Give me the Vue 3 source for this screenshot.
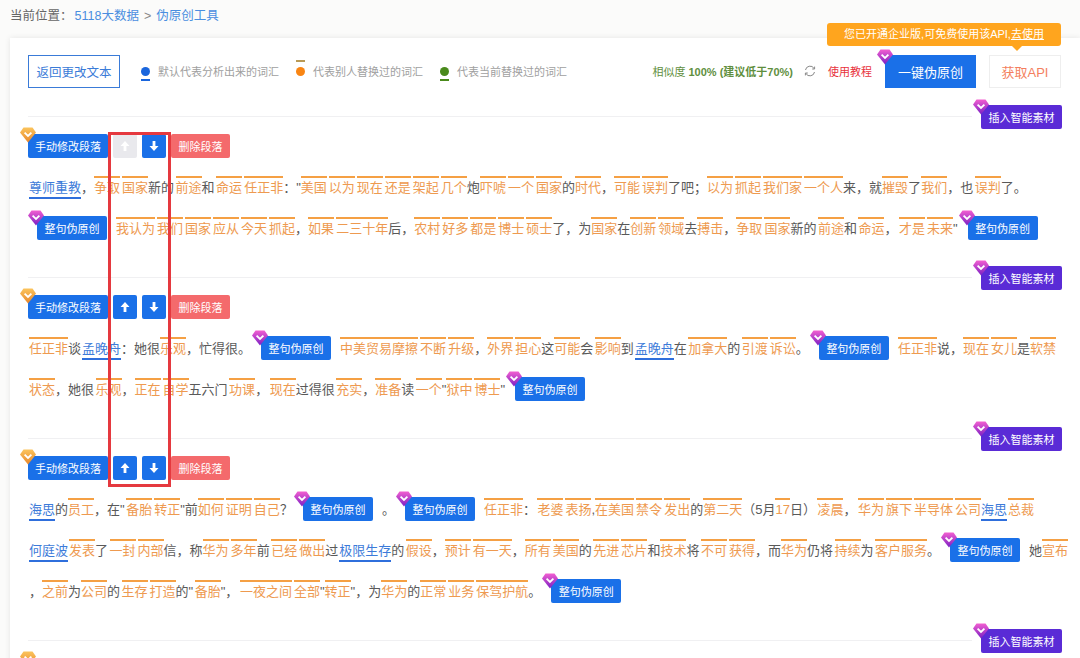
<template>
  <div class="page">
    <svg class="defs" width="0" height="0">
      <defs>
        <linearGradient id="gemPurple" x1="0" y1="0" x2="0" y2="1">
          <stop offset="0" stop-color="#f25fd0" />
          <stop offset="1" stop-color="#7a1fc4" />
        </linearGradient>
        <linearGradient id="gemOrange" x1="0" y1="0" x2="0" y2="1">
          <stop offset="0" stop-color="#fbc45c" />
          <stop offset="1" stop-color="#e8872b" />
        </linearGradient>
      </defs>
    </svg>

    <div class="crumb">
      <span class="crumb-label">当前位置：</span><a class="link">5118大数据</a><span class="sep">&gt;</span><a class="link">伪原创工具</a>
    </div>

    <div class="card">
      <div class="toolbar">
        <button class="back">返回更改文本</button>
        <div class="legend first">
          <span class="mark blue"></span>默认代表分析出来的词汇
        </div>
        <div class="legend">
          <span class="mark orange"></span>代表别人替换过的词汇
        </div>
        <div class="legend">
          <span class="mark green"></span>代表当前替换过的词汇
        </div>
        <div class="right">
          <span class="similar">相似度 <b>100% (建议低于70%)</b></span>
          <svg class="refresh" viewBox="0 0 12 12" width="12" height="12">
            <path d="M1.5 5A4.6 4.6 0 0 1 10 3.4M10.5 7A4.6 4.6 0 0 1 2 8.6" fill="none" stroke="#888" stroke-width="1" />
            <path d="M10.6 1.6V4H8.2M1.4 10.4V8H3.8" fill="none" stroke="#888" stroke-width="1" />
          </svg>
          <a class="guide">使用教程</a>
          <button class="one-key">
            <svg class="gem gem-key" viewBox="0 0 16 16"><path d="M3.500.5h9l3.500 5L8 15.500 0 5.500z" fill="url(#gemPurple)" /><path d="M4.600 5.600 8 9l3.400-3.400" fill="none" stroke="#fff" stroke-width="1.800" /></svg>
            一键伪原创
          </button>
          <div class="api-wrap">
            <div class="tip">您已开通企业版,可免费使用该API,<u>去使用</u></div>
            <button class="api">获取API</button>
          </div>
        </div>
      </div>

      <section v-for="(seg, i) in segments" :key="i" class="seg">
        <button class="insert">
          <svg class="gem gem-insert" viewBox="0 0 16 16"><path d="M3.500.5h9l3.500 5L8 15.500 0 5.500z" fill="url(#gemPurple)" /><path d="M4.600 5.600 8 9l3.400-3.400" fill="none" stroke="#fff" stroke-width="1.800" /></svg>
          插入智能素材
        </button>
        <div class="seg-btns">
          <button class="btn manual">
            <svg class="gem gem-manual" viewBox="0 0 16 16"><path d="M3.500.5h9l3.500 5L8 15.500 0 5.500z" fill="url(#gemOrange)" /><path d="M4.600 5.600 8 9l3.400-3.400" fill="none" stroke="#fff" stroke-width="1.800" /></svg>
            <template v-if="seg.length">手动修改段落</template>
          </button>
          <button class="btn arrow up" :class="{ off: i === 0 }">
            <svg viewBox="0 0 12 12" width="12" height="12"><path d="M6 1 10.500 6H7.400v5H4.600V6H1.500z" fill="#fff" /></svg>
          </button>
          <button class="btn arrow down" :class="{ off: !seg.length }">
            <svg viewBox="0 0 12 12" width="12" height="12"><path d="M6 11 10.500 6H7.400V1H4.600v5H1.500z" fill="#fff" /></svg>
          </button>
          <button class="btn del"><template v-if="seg.length">删除段落</template></button>
        </div>
        <div v-for="(line, n) in seg" :key="n" class="line">
          <template v-for="(t, k) in line" :key="k">
            <button v-if="t.type === 'btn'" class="btn whole">
              <svg class="gem gem-whole" viewBox="0 0 16 16"><path d="M3.500.5h9l3.500 5L8 15.500 0 5.500z" fill="url(#gemPurple)" /><path d="M4.600 5.600 8 9l3.400-3.400" fill="none" stroke="#fff" stroke-width="1.800" /></svg>
              整句伪原创
            </button>
            <span v-else :class="t.type">{{ t.text }}</span>
          </template>
        </div>
      </section>
    </div>

    <div class="red-box"></div>
  </div>
</template>

<script setup>
// {} = replaced word ({^} has a little extra space), [] = analysed word, # = sentence button
const parse = (s) =>
  s
    .split(/(\{.+?\}|\[.+?\]|#)/)
    .filter(Boolean)
    .map((t) => {
      if (t === '#') return { type: 'btn' }
      if (t.startsWith('{^')) return { type: 'word gap', text: t.slice(2, -1) }
      if (t[0] === '{') return { type: 'word', text: t.slice(1, -1) }
      if (t[0] === '[') return { type: 'key', text: t.slice(1, -1) }
      return { type: 'plain', text: t }
    })

const segments = [
  [
    '[尊师重教]，{争取}{国家}新的{^前途}和{^命运}{任正非}："{美国}{以为}{现在}{还是}{架起}{几个}炮{吓唬}{一个}{国家}的{时代}，{可能}{误判}了吧；{以为}{抓起}{我们家}{一个人}来，就{摧毁}了{我们}，也{^误判}了。',
    '#{我认为}{我们}{国家}{应从}{今天}{抓起}，{如果}{二三十年}后，{农村}{好多}{都是}{博士}{硕士}了，为{国家}在{创新}{领域}去{搏击}，{争取}{国家}新的{^前途}和{^命运}，{^才是}{未来}"#',
  ],
  [
    '{任正非}谈[孟晚舟]：她很{乐观}，忙得很。#{中美贸易摩擦}{不断}{升级}，{外界}{担心}这{可能}会{^影响}到[孟晚舟]在{^加拿大}的{^引渡}{诉讼}。#{任正非}说，{现在}{女儿}是{软禁}',
    '{状态}，她很{^乐观}，{正在}{自学}五六门{^功课}，{^现在}过得很{^充实}，{准备}读{^一个}"{狱中}{博士}"#',
  ],
  [
    '[海思]的{员工}，在"{^备胎}{转正}"前{如何}{证明}{自己}？#。#{任正非}：{^老婆}{表扬},{在美国}{禁令}{发出}的{第二天}（5月{17}日）{^凌晨}，{^华为}{旗下}{半导体}{公司}[海思]{总裁}',
    '[何庭波]{发表}了{^一封}{内部}信，称{华为}{多年}前{^已经}{做出}过[极限生存]的{^假设}，{预计}{有一天}，{所有}{美国}的{^先进}{芯片}和{技术}将{^不可}{获得}，而{华为}仍将{^持续}为{^客户服务}。#她{宣布}',
    '，{之前}为{公司}的{^生存}{打造}的"{^备胎}"，{^一夜之间}{全部}"{转正}"，为{华为}的{正常}{业务}{保驾护航}。#',
  ],
  [],
].map((seg) => seg.map(parse))
</script>

<style>
html,
body {
  margin: 0;
  background: #fbfbfa;
}
</style>

<style scoped>
.page {
  position: relative;
  height: 100vh;
  overflow: hidden;
  font-family: "Liberation Sans", "Noto Sans CJK SC", sans-serif;
  color: #595959;
}

.defs {
  position: absolute;
}

button {
  font-family: inherit;
  border: none;
  padding: 0;
  cursor: pointer;
}

.crumb {
  height: 38px;
  padding: 8px 0 0 10px;
  box-sizing: border-box;
  font-size: 12.5px;
  line-height: 16px;
  color: #666;
}

.crumb-label {
  margin-right: 2px;
}

.link {
  color: #4a8ee0;
}

.sep {
  margin: 0 5px;
  color: #888;
}

.card {
  margin-left: 10px;
  padding: 0 18px;
  height: 640px;
  background: #fff;
  box-shadow: 0 0 6px rgba(0, 0, 0, 0.09);
}

.toolbar {
  display: flex;
  align-items: center;
  height: 78px;
  padding-bottom: 12px;
  box-sizing: border-box;
}

.back {
  width: 92px;
  height: 33px;
  background: #fff;
  border: 1px solid #3a7bd8;
  color: #3a7bd8;
  font-size: 12.5px;
}

.legend {
  position: relative;
  display: flex;
  align-items: center;
  margin-left: 17px;
  font-size: 11px;
  color: #a0a0a0;
}

.legend.first {
  margin-left: 21px;
}

.mark {
  position: relative;
  width: 9px;
  height: 9px;
  margin-right: 8px;
  border-radius: 50%;
}

.mark::after {
  content: "";
  position: absolute;
  left: 0;
  width: 9px;
  height: 2px;
}

.mark.blue {
  background: #1a66dd;
}

.mark.blue::after {
  top: 12px;
  background: #1a66dd;
}

.mark.orange {
  background: #f98513;
}

.mark.orange::after {
  top: -7px;
  background: #b99a55;
}

.mark.green {
  background: #4a8a1c;
}

.mark.green::after {
  top: 12px;
  background: #4a8a1c;
}

.right {
  display: flex;
  align-items: center;
  margin-left: auto;
  margin-right: 1px;
}

.similar {
  font-size: 11px;
  color: #5f8f3e;
}

.refresh {
  margin-left: 11px;
}

.guide {
  margin-left: 12px;
  font-size: 11px;
  color: #e8323c;
}

.one-key {
  position: relative;
  width: 91px;
  height: 33px;
  margin-left: 13px;
  background: #1a70e8;
  color: #fff;
  font-size: 13px;
}

.api-wrap {
  position: relative;
  margin-left: 13px;
}

.api {
  display: block;
  width: 72px;
  height: 33px;
  background: #fff;
  border: 1px solid #eee;
  color: #f47f5e;
  font-size: 13px;
}

.tip {
  position: absolute;
  right: 0;
  top: -32px;
  width: 234px;
  height: 23px;
  background: #ffa51e;
  border-radius: 3px;
  color: #fff;
  font-size: 11px;
  line-height: 23px;
  text-align: center;
  white-space: nowrap;
}

.tip::after {
  content: "";
  position: absolute;
  right: 39px;
  bottom: -5px;
  border-left: 5px solid transparent;
  border-right: 5px solid transparent;
  border-top: 5px solid #ffa51e;
}

.gem {
  position: absolute;
  width: 16px;
  height: 16px;
}

.gem-key,
.gem-insert {
  left: -8px;
  top: -6px;
}

.gem-manual {
  left: -8px;
  top: -7px;
}

.gem-whole {
  left: -9px;
  top: -6px;
}

.seg {
  position: relative;
  padding: 17px 0 28px;
  border-top: 1px solid #f0f0f2;
}

.insert {
  position: absolute;
  right: 0;
  top: -12px;
  width: 81px;
  height: 24px;
  background: #5a2bd6;
  border-radius: 2px;
  color: #fff;
  font-size: 11px;
  box-shadow: -9px 0 0 #fff;
}

.seg-btns {
  display: flex;
  gap: 5px;
  height: 24px;
  margin-bottom: 9px;
}

.btn {
  position: relative;
  height: 24px;
  background: #1a70e8;
  border-radius: 2px;
  color: #fff;
  font-size: 11px;
}

.manual {
  width: 80px;
}

.arrow {
  display: flex;
  align-items: center;
  justify-content: center;
  width: 24px;
}

.arrow.off {
  background: #e9e9ed;
}

.del {
  width: 59px;
  background: #f46a6c;
}

.line {
  height: 41px;
  padding-left: 1px;
  line-height: 41px;
  font-size: 13px;
  white-space: nowrap;
}

.whole {
  display: inline-block;
  width: 70px;
  margin: 0 9px 3px 10px;
  vertical-align: middle;
}

.whole:first-child {
  margin-left: 8px;
}

.word {
  padding-top: 2px;
  border-top: 2px solid #f5a044;
  color: #ee9a50;
}

.word + .word {
  margin-left: 2px;
}

.word.gap {
  margin-left: 1.5px;
}

.key + .word {
  margin-left: 1px;
}

.key {
  padding-bottom: 2px;
  border-bottom: 2px solid #2f6fdc;
  color: #3d7bd9;
}

.plain + .key {
  margin-left: 1px;
}

.red-box {
  position: absolute;
  left: 108px;
  top: 132px;
  width: 57px;
  height: 349px;
  border: 3px solid #e5393f;
}
</style>
